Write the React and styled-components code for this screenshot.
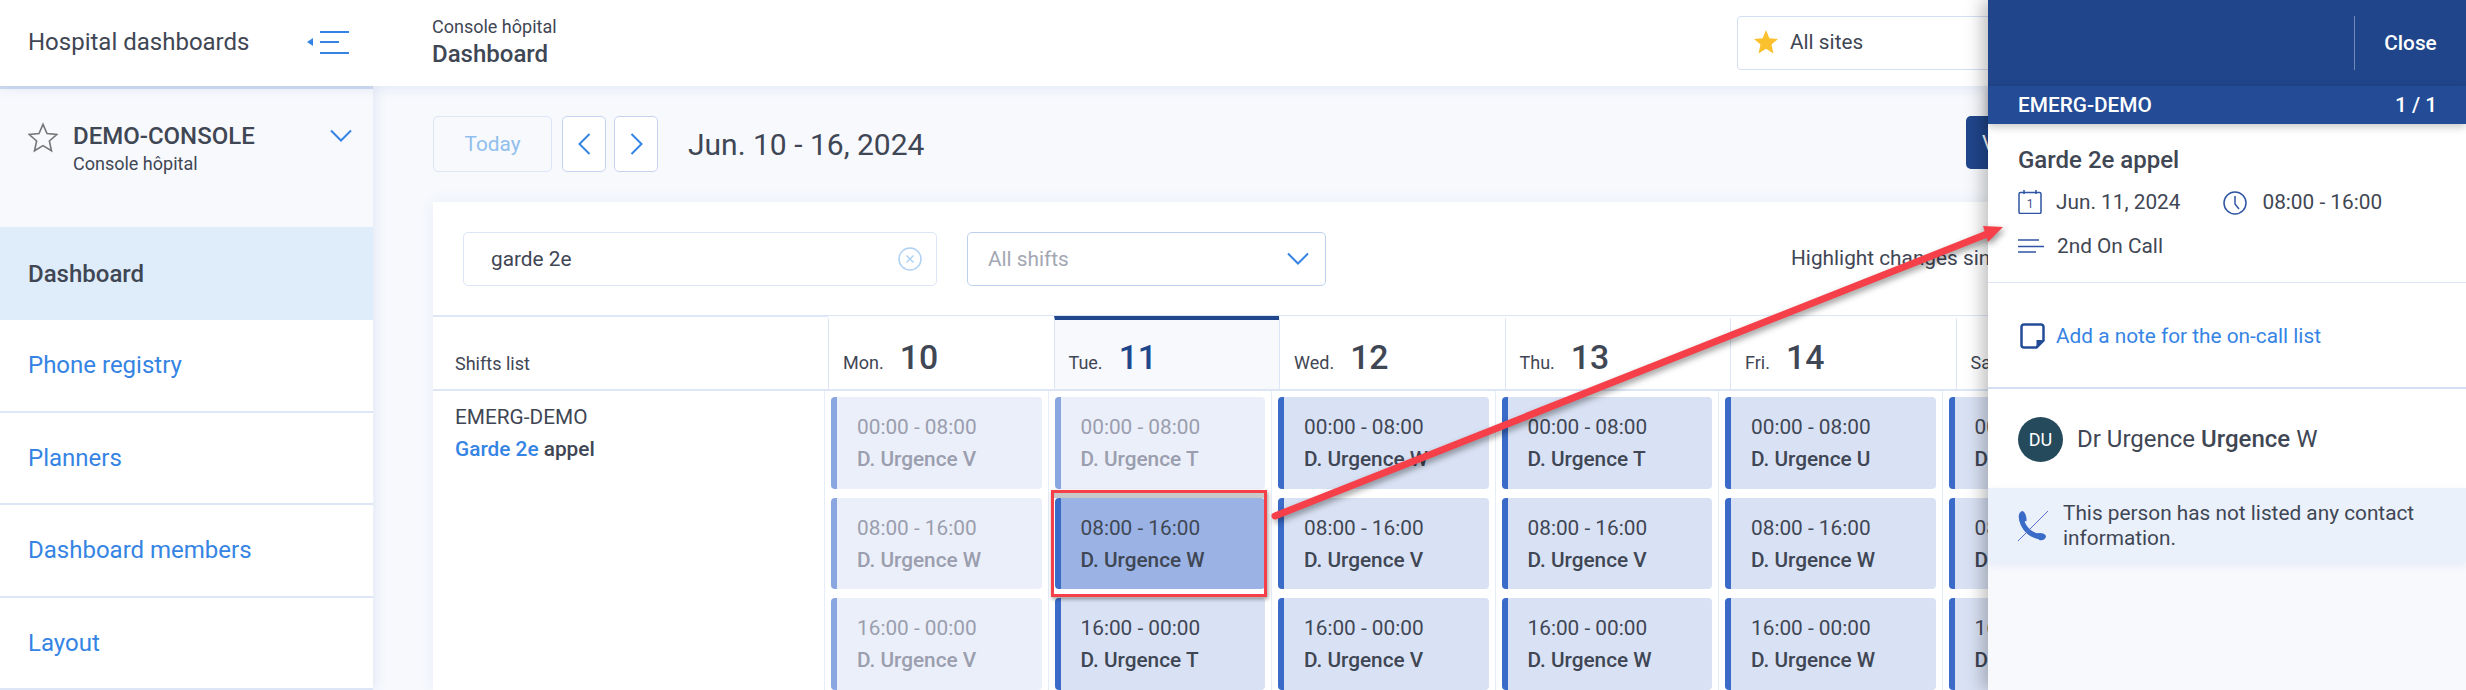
import React from "react";
import styled, { createGlobalStyle } from "styled-components";

const GlobalStyle = createGlobalStyle`
  html, body {
    margin: 0;
    padding: 0;
    background: #f7f9fd;
    font-family: Roboto, "Liberation Sans", sans-serif;
    color: #3f4654;
  }
  * { box-sizing: border-box; }
`;

const Page = styled.div`
  position: relative;
  width: 2466px;
  height: 690px;
  overflow: hidden;
  background: #f7f9fd;
`;

const TopBar = styled.header`
  position: relative;
  z-index: 2;
  display: flex;
  align-items: center;
  height: 86px;
  background: #fff;
  box-shadow: 0 2px 12px rgba(70, 100, 180, 0.12);
`;

const Brand = styled.div`
  display: flex;
  align-items: center;
  justify-content: space-between;
  width: 432px;
  padding: 0 83px 0 28px;
  font-size: 24px;
  line-height: 28px;
  margin-top: -3px;
`;

const Crumbs = styled.div`
  display: flex;
  flex-direction: column;
  gap: 3px;
  margin-top: -2px;
`;

const CrumbSmall = styled.div`
  font-size: 18px;
  line-height: 21px;
`;

const CrumbTitle = styled.div`
  font-size: 24px;
  line-height: 28px;
  font-weight: 500;
`;

const SiteSelect = styled.div`
  display: flex;
  align-items: center;
  gap: 12px;
  width: 500px;
  height: 54px;
  margin-left: auto;
  margin-right: 229px;
  padding-left: 16px;
  padding-bottom: 3px;
  background: #fff;
  border: 1px solid #d3dff3;
  border-radius: 4px;
  font-size: 20.8px;
`;

const Body = styled.div`
  display: flex;
  height: 604px;
`;

const Sidebar = styled.aside`
  position: relative;
  z-index: 1;
  flex: 0 0 373px;
  background: #fff;
  box-shadow: 2px 0 12px rgba(70, 100, 180, 0.12);
`;

const ConsoleBox = styled.div`
  display: flex;
  align-items: flex-start;
  gap: 15px;
  height: 141px;
  padding: 33px 21px 0 28px;
  background: #f7f9fd;
  border-top: 3px solid #cfdcf0;
`;

const ConsoleText = styled.div`
  flex: 1;
`;

const ConsoleName = styled.div`
  font-size: 24px;
  line-height: 28px;
  font-weight: 500;
`;

const ConsoleSub = styled.div`
  margin-top: 2px;
  font-size: 18px;
  line-height: 24px;
`;

const ConsoleToggle = styled.span`
  margin-top: 5px;
`;

const NavItem = styled.div`
  display: flex;
  align-items: center;
  height: ${(p) => (p.$active ? "93px" : "92.5px")};
  padding-left: 28px;
  font-size: 24px;
  font-weight: ${(p) => (p.$active ? 500 : 400)};
  color: ${(p) => (p.$active ? "#3f4654" : "#3584e4")};
  background: ${(p) => (p.$active ? "#dfecf9" : "#fff")};
  border-bottom: ${(p) => (p.$active ? "none" : "2px solid #dce6f7")};
`;

const Main = styled.main`
  flex: 1;
  min-width: 0;
  padding: 30px 0 0 60px;
  overflow: hidden;
`;

const Toolbar = styled.div`
  display: flex;
  align-items: center;
  height: 56px;
  padding-right: 300px;
`;

const TodayButton = styled.div`
  display: flex;
  align-items: center;
  justify-content: center;
  width: 119px;
  height: 56px;
  margin-right: 10px;
  border: 1px solid #dce6f7;
  border-radius: 5px;
  font-size: 20.8px;
  color: #90bfee;
`;

const ArrowButton = styled.div`
  display: flex;
  align-items: center;
  justify-content: center;
  width: 44px;
  height: 56px;
  margin-right: 8px;
  background: #fff;
  border: 1px solid #c3d4ef;
  border-radius: 5px;
`;

const DateRange = styled.div`
  margin-left: 22px;
  font-size: 30px;
`;

const ViewButton = styled.div`
  display: flex;
  align-items: center;
  width: 200px;
  height: 53px;
  margin-left: auto;
  margin-top: -3px;
  padding-left: 16px;
  background: #20468c;
  border-radius: 5px;
  color: #fff;
  font-size: 20.8px;
`;

const Card = styled.section`
  width: 2100px;
  margin-top: 30px;
  background: #fff;
  box-shadow: 0 0 14px rgba(70, 100, 180, 0.08);
`;

const Filters = styled.div`
  display: flex;
  align-items: center;
  height: 113px;
  padding: 0 30px;
`;

const SearchBox = styled.div`
  display: flex;
  align-items: center;
  justify-content: space-between;
  width: 474px;
  height: 54px;
  padding: 0 14px 0 27px;
  border: 1px solid #dce6f7;
  border-radius: 5px;
  font-size: 20.8px;
`;

const ShiftSelect = styled.div`
  display: flex;
  align-items: center;
  justify-content: space-between;
  width: 359px;
  height: 54px;
  margin-left: 30px;
  padding: 0 16px 0 20px;
  border: 1px solid #bcd0ee;
  border-radius: 5px;
  font-size: 20.8px;
  color: #a3a7b3;
`;

const HighlightLabel = styled.div`
  margin-left: 465px;
  margin-top: -2px;
  font-size: 20.8px;
  white-space: nowrap;
`;

const HeadRow = styled.div`
  display: grid;
  grid-template-columns: 395px repeat(7, 225.5px);
  height: 76px;
  border-top: 2px solid #dce6f7;
  border-bottom: 2px solid #dce6f7;
`;

const ListTitle = styled.div`
  display: flex;
  align-items: center;
  padding-left: 22px;
  padding-top: 20px;
  font-size: 18px;
`;

const DayHead = styled.div`
  display: flex;
  align-items: baseline;
  gap: 16px;
  padding: 18px 0 0 14px;
  border-left: 1px solid #dce6f7;
  background: ${(p) => (p.$today ? "#f7f9fd" : "#fff")};
  border-top: ${(p) => (p.$today ? "4px solid #20468c" : "4px solid transparent")};
  margin-top: -1px;
`;

const DayName = styled.span`
  font-size: 18px;
`;

const DayNumber = styled.span`
  font-size: 33.8px;
  font-weight: 500;
  color: ${(p) => (p.$today ? "#20468c" : "#3f4654")};
`;

const Grid = styled.div`
  display: grid;
  grid-template-columns: 391px repeat(7, 223.5px);
  height: 300px;
`;

const ShiftLabel = styled.div`
  padding: 13px 0 0 22px;
`;

const ShiftService = styled.div`
  font-size: 20.8px;
  line-height: 26px;
`;

const ShiftName = styled.div`
  margin-top: 6px;
  font-size: 20.8px;
  line-height: 26px;
  font-weight: 500;
`;

const Match = styled.span`
  color: #3584e4;
`;

const DayColumn = styled.div`
  display: flex;
  flex-direction: column;
  gap: 9px;
  padding: 6px 6px 0 6px;
  border-left: 1px solid #e6ecf8;
`;

const Slot = styled.div`
  flex: 0 0 91.5px;
  padding: 15px 0 0 20px;
  border-left: 6px solid ${(p) => (p.$muted ? "#8aa6e0" : "#3a6bc8")};
  border-radius: 4px;
  background: ${(p) => (p.$selected ? "#9bb3e4" : p.$muted ? "#ebeff9" : "#d9e2f4")};
  color: ${(p) => (p.$muted ? "#9a9eae" : "#3f4654")};
`;

const SlotTime = styled.div`
  font-size: 20.8px;
  line-height: 31px;
`;

const SlotName = styled.div`
  margin-top: 1px;
  font-size: 20.8px;
  line-height: 31px;
  font-weight: 500;
`;

const Panel = styled.aside`
  position: absolute;
  z-index: 3;
  top: 0;
  right: 0;
  bottom: 0;
  width: 478px;
  background: #f7f9fd;
  box-shadow: -6px 0 16px rgba(0, 0, 0, 0.25);
`;

const PanelTop = styled.div`
  display: flex;
  align-items: center;
  justify-content: flex-end;
  height: 86px;
  background: #20458a;
`;

const CloseButton = styled.div`
  display: flex;
  align-items: center;
  justify-content: center;
  width: 112px;
  height: 54px;
  margin-top: -1px;
  border-left: 1px solid #6f8ab9;
  color: #fff;
  font-size: 20.8px;
  font-weight: 500;
`;

const PanelBand = styled.div`
  position: relative;
  display: flex;
  align-items: center;
  justify-content: space-between;
  height: 38px;
  padding: 0 29px 0 30px;
  background: #234b96;
  color: #fff;
  font-size: 20.8px;
  font-weight: 500;
  box-shadow: 0 3px 8px rgba(0, 0, 0, 0.22);
`;

const ShiftInfo = styled.div`
  height: 160px;
  padding: 22px 30px 0;
  background: #fff;
  border-bottom: 2px solid #dce6f7;
`;

const InfoTitle = styled.div`
  font-size: 24px;
  line-height: 28px;
  font-weight: 500;
`;

const InfoRow = styled.div`
  display: flex;
  align-items: center;
  height: 28px;
  margin-top: ${(p) => p.$gap}px;
  font-size: 20.8px;
`;

const InfoText = styled.span`
  margin-left: ${(p) => p.$left}px;
  line-height: 24px;
`;

const NoteRow = styled.div`
  display: flex;
  align-items: center;
  gap: 11px;
  height: 106px;
  padding: 2px 0 0 32px;
  margin-top: -1px;
  background: #fff;
  border-bottom: 2px solid #d3dff3;
  color: #3584e4;
  font-size: 20.8px;
`;

const PersonRow = styled.div`
  display: flex;
  align-items: center;
  gap: 14px;
  height: 99px;
  padding: 1px 0 0 30px;
  background: #fff;
  font-size: 24px;
`;

const Avatar = styled.div`
  display: flex;
  align-items: center;
  justify-content: center;
  width: 45px;
  height: 45px;
  border-radius: 50%;
  background: #254a5c;
  color: #fff;
  font-size: 18px;
`;

const Bold = styled.span`
  font-weight: 500;
`;

const ContactRow = styled.div`
  display: flex;
  align-items: center;
  gap: 15px;
  height: 74px;
  padding: 2px 0 0 30px;
  background: #eaf1fb;
  font-size: 20.8px;
  line-height: 25px;
  box-shadow: 0 3px 8px rgba(70, 100, 180, 0.1);
`;

const ContactText = styled.div`
  width: 380px;
`;

const RedBox = styled.div`
  position: absolute;
  z-index: 4;
  left: 1051px;
  top: 490px;
  width: 216px;
  height: 107px;
  border: 3px solid #f5404a;
  box-shadow: 1px 2px 4px rgba(0, 0, 0, 0.4);

  &::before {
    content: "";
    display: block;
    height: 5px;
    background: #c9c9c9;
  }
`;

const ArrowLayer = styled.svg`
  position: absolute;
  z-index: 5;
  left: 0;
  top: 0;
  filter: drop-shadow(2px 3px 3px rgba(0, 0, 0, 0.4));
  pointer-events: none;
`;

const days = [
  { name: "Mon.", num: 10, muted: [true, true, true], people: ["V", "W", "V"] },
  { name: "Tue.", num: 11, today: true, muted: [true, false, false], people: ["T", "W", "T"], selected: 1 },
  { name: "Wed.", num: 12, people: ["W", "V", "V"] },
  { name: "Thu.", num: 13, people: ["T", "V", "W"] },
  { name: "Fri.", num: 14, people: ["U", "W", "W"] },
  { name: "Sat.", num: 15, people: ["V", "V", "W"] },
  { name: "Sun.", num: 16, people: ["V", "W", "V"] },
];

const times = ["00:00 - 08:00", "08:00 - 16:00", "16:00 - 00:00"];
const navItems = ["Phone registry", "Planners", "Dashboard members", "Layout"];

function Chevron({ dir = "down", size = 22, height = 13 }) {
  const points = { down: "1,1 11,11 21,1", left: "11,1 1,11 11,21", right: "1,1 11,11 1,21" };
  const box = dir === "down" ? "0 0 22 12" : "0 0 12 22";
  return (
    <svg width={size} height={height} viewBox={box} fill="none" stroke="#3584e4" strokeWidth="2">
      <polyline points={points[dir]} />
    </svg>
  );
}

export default function App() {
  return (
    <Page>
      <GlobalStyle />
      <TopBar>
        <Brand>
          <span>Hospital dashboards</span>
          <svg width="42" height="24" viewBox="0 0 42 24" fill="none" stroke="#3584e4" strokeWidth="2">
            <path d="M13 2h29M13 12h19M13 23h29" />
            <path d="M6 8v8L0 12z" fill="#3584e4" stroke="none" />
          </svg>
        </Brand>
        <Crumbs>
          <CrumbSmall>Console hôpital</CrumbSmall>
          <CrumbTitle>Dashboard</CrumbTitle>
        </Crumbs>
        <SiteSelect>
          <svg width="24" height="24" viewBox="0 0 24 24" fill="#fbc02d">
            <path d="M12 0l3.400 8.200 8.600.7-6.500 5.700 2 8.900L12 18.700l-7.500 4.800 2-8.900L0 8.900l8.600-.7z" />
          </svg>
          All sites
        </SiteSelect>
      </TopBar>

      <Body>
        <Sidebar>
          <ConsoleBox>
            <svg width="30" height="31" viewBox="0 0 24 24" fill="none" stroke="#777" strokeWidth="1.300">
              <path d="M12 1.500l3.200 7.300 7.800.8-5.900 5.200 1.700 7.800-6.800-4.100-6.800 4.100 1.700-7.800L1 9.600l7.800-.8z" />
            </svg>
            <ConsoleText>
              <ConsoleName>DEMO-CONSOLE</ConsoleName>
              <ConsoleSub>Console hôpital</ConsoleSub>
            </ConsoleText>
            <ConsoleToggle>
              <Chevron />
            </ConsoleToggle>
          </ConsoleBox>
          <NavItem $active>Dashboard</NavItem>
          {navItems.map((item) => (
            <NavItem key={item}>{item}</NavItem>
          ))}
        </Sidebar>

        <Main>
          <Toolbar>
            <TodayButton>Today</TodayButton>
            <ArrowButton>
              <Chevron dir="left" size={13} height={22} />
            </ArrowButton>
            <ArrowButton>
              <Chevron dir="right" size={13} height={22} />
            </ArrowButton>
            <DateRange>Jun. 10 - 16, 2024</DateRange>
            <ViewButton>View</ViewButton>
          </Toolbar>

          <Card>
            <Filters>
              <SearchBox>
                garde 2e
                <svg width="24" height="24" viewBox="0 0 24 24" fill="none" stroke="#aed2f4" strokeWidth="1.500">
                  <circle cx="12" cy="12" r="11" />
                  <path d="M8.500 8.500l7 7M15.500 8.500l-7 7" />
                </svg>
              </SearchBox>
              <ShiftSelect>
                All shifts
                <Chevron />
              </ShiftSelect>
              <HighlightLabel>Highlight changes since</HighlightLabel>
            </Filters>

            <HeadRow>
              <ListTitle>Shifts list</ListTitle>
              {days.map((d) => (
                <DayHead key={d.num} $today={d.today}>
                  <DayName>{d.name}</DayName>
                  <DayNumber $today={d.today}>{d.num}</DayNumber>
                </DayHead>
              ))}
            </HeadRow>

            <Grid>
              <ShiftLabel>
                <ShiftService>EMERG-DEMO</ShiftService>
                <ShiftName>
                  <Match>Garde 2e</Match> appel
                </ShiftName>
              </ShiftLabel>
              {days.map((d) => (
                <DayColumn key={d.num}>
                  {times.map((t, i) => (
                    <Slot key={t} $muted={d.muted?.[i]} $selected={d.selected === i}>
                      <SlotTime>{t}</SlotTime>
                      <SlotName>D. Urgence {d.people[i]}</SlotName>
                    </Slot>
                  ))}
                </DayColumn>
              ))}
            </Grid>
          </Card>
        </Main>
      </Body>

      <Panel>
        <PanelTop>
          <CloseButton>Close</CloseButton>
        </PanelTop>
        <PanelBand>
          <span>EMERG-DEMO</span>
          <span>1 / 1</span>
        </PanelBand>
        <ShiftInfo>
          <InfoTitle>Garde 2e appel</InfoTitle>
          <InfoRow $gap={14}>
            <svg width="24" height="24" viewBox="0 0 24 24" fill="none" stroke="#2f55a4" strokeWidth="1.500">
              <rect x="1" y="2.500" width="22" height="21" rx="1.500" />
              <path d="M6 0v4M18 0v4" />
              <text x="12" y="18" fontSize="12" fill="#4a4f8c" stroke="none" textAnchor="middle" fontFamily="Roboto">1</text>
            </svg>
            <InfoText $left={14}>Jun. 11, 2024</InfoText>
            <InfoText $left={43}>
              <svg width="24" height="24" viewBox="0 0 24 24" fill="none" stroke="#2f55a4" strokeWidth="1.500" style={{ verticalAlign: "middle" }}>
                <circle cx="12" cy="12" r="11" />
                <path d="M12 5v8l4 5" />
              </svg>
            </InfoText>
            <InfoText $left={15}>08:00 - 16:00</InfoText>
          </InfoRow>
          <InfoRow $gap={16}>
            <svg width="26" height="14" viewBox="0 0 26 14" fill="none" stroke="#2f55a4" strokeWidth="1.500">
              <path d="M0 1h21M0 7.500h26M0 13h18" />
            </svg>
            <InfoText $left={13}>2nd On Call</InfoText>
          </InfoRow>
        </ShiftInfo>
        <NoteRow>
          <svg width="25" height="26" viewBox="0 0 25 26" fill="none">
            <path d="M4 1.500h17a2.500 2.500 0 0 1 2.500 2.500v13.500l-7 7H4A2.500 2.500 0 0 1 1.500 22V4A2.500 2.500 0 0 1 4 1.500z" stroke="#234b96" strokeWidth="2.500" />
            <path d="M24 17h-7.500v8z" fill="#234b96" />
          </svg>
          Add a note for the on-call list
        </NoteRow>
        <PersonRow>
          <Avatar>DU</Avatar>
          <span>
            Dr Urgence <Bold>Urgence</Bold> W
          </span>
        </PersonRow>
        <ContactRow>
          <svg width="30" height="30" viewBox="0 0 30 30" fill="none" style={{ flex: "none" }}>
            <path d="M4 3C2 13 10 25 24 26" stroke="#3a6bc8" strokeWidth="5" />
            <path d="M4 0c3 0 5 6 4.500 10L2 11C0 7 0 2 4 0zM18 23c3-2 9-1 10 2 0 3-3 5-7 4z" fill="#3a6bc8" />
            <path d="M30 0L0 30" stroke="#5a6fc8" strokeWidth="1" />
          </svg>
          <ContactText>This person has not listed any contact information.</ContactText>
        </ContactRow>
      </Panel>

      <RedBox />
      <ArrowLayer width="2466" height="690" viewBox="0 0 2466 690">
        <path d="M1275 516L1987 234" stroke="#f5404a" strokeWidth="7" strokeLinecap="round" />
        <polygon points="2003,227 1983,226 1988,242" fill="#f5404a" />
      </ArrowLayer>
    </Page>
  );
}
